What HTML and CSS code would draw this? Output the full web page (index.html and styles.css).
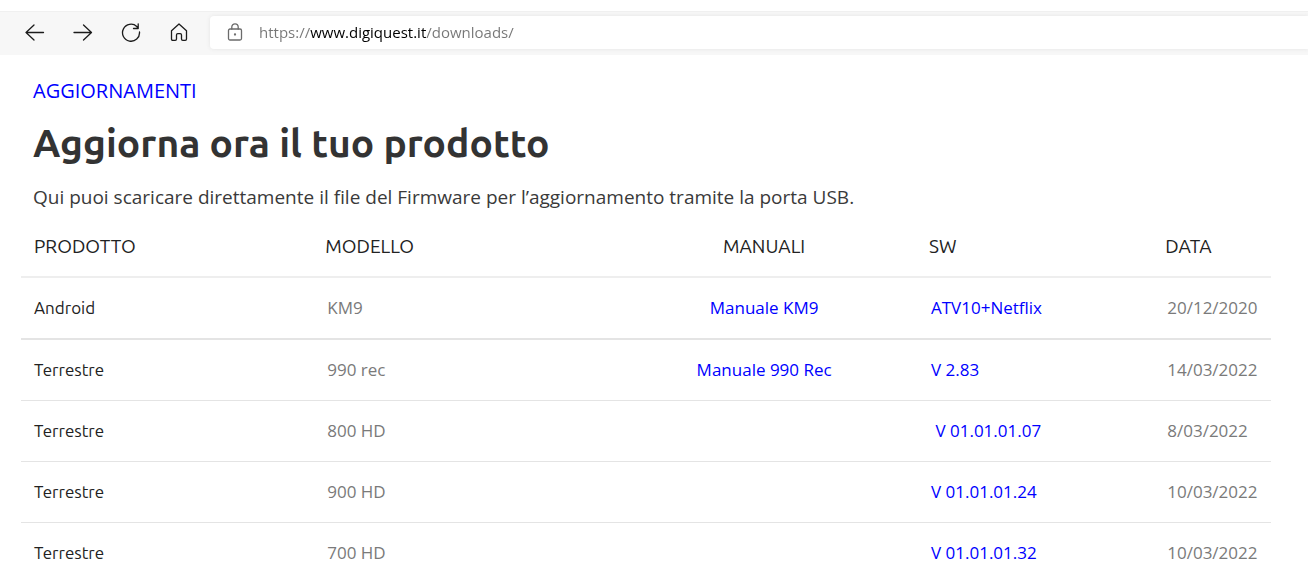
FILE: index.html
```html
<!DOCTYPE html>
<html lang="it">
<head>
<meta charset="utf-8">
<meta name="viewport" content="width=device-width, initial-scale=1">
<title>Aggiornamenti</title>
<link rel="stylesheet" href="styles.css">
</head>
<body>
<header class="toolbar">
  <nav class="nav-buttons">
    <button class="icon-button" type="button" aria-label="Indietro"><svg viewBox="0 0 20 20"><path d="M18.500 9.500H1M9 2L1 9.500l8 7.500"/></svg></button>
    <button class="icon-button" type="button" aria-label="Avanti"><svg viewBox="0 0 20 20"><path d="M1 9.500h17.500M10.500 2l8 7.500-8 7.500"/></svg></button>
    <button class="icon-button" type="button" aria-label="Aggiorna"><svg viewBox="0 0 20 20"><path d="M18.500 9A8.500 8.500 0 1 1 15.800 3.500L17 5M17.200 .8v4.700h-4.700"/></svg></button>
    <button class="icon-button" type="button" aria-label="Pagina iniziale"><svg viewBox="0 0 20 20"><path d="M2.500 7.700L10 1l7.500 6.700v8.300q0 1.300-1.300 1.300h-2.400q-1.300 0-1.300-1.300v-4q0-1.300-1.300-1.300H8.800q-1.300 0-1.300 1.300v4q0 1.300-1.300 1.300H3.800q-1.300 0-1.300-1.300z"/></svg></button>
  </nav>
  <label class="address">
    <svg class="lock" viewBox="0 0 20 20"><rect x="3.500" y="6" width="13" height="11" rx="1.500"/><path d="M6.800 6V4a3.200 3.200 0 0 1 6.400 0v2"/><circle cx="10" cy="11.500" r=".5"/></svg>
    <input class="url" type="text" aria-label="Indirizzo" value="https://www.digiquest.it/downloads/">
  </label>
</header>
<main class="page">
  <section class="intro">
    <a class="eyebrow" href="#aggiornamenti">AGGIORNAMENTI</a>
    <h1 class="title">Aggiorna ora il tuo prodotto</h1>
    <p class="lead">Qui puoi scaricare direttamente il file del Firmware per l’aggiornamento tramite la porta USB.</p>
  </section>
  <table class="downloads" id="aggiornamenti">
    <colgroup><col class="col-product"><col class="col-model"><col class="col-manual"><col class="col-sw"><col class="col-date"></colgroup>
    <thead>
      <tr><th scope="col">PRODOTTO</th><th scope="col">MODELLO</th><th scope="col" class="manual">MANUALI</th><th scope="col">SW</th><th scope="col">DATA</th></tr>
    </thead>
    <tbody>
      <tr class="strong-line"><td class="product">Android</td><td>KM9</td><td class="manual"><a href="#km9">Manuale KM9</a></td><td><a href="#atv10">ATV10+Netflix</a></td><td>20/12/2020</td></tr>
      <tr><td class="product">Terrestre</td><td>990 rec</td><td class="manual"><a href="#990rec">Manuale 990 Rec</a></td><td><a href="#v283">V 2.83</a></td><td>14/03/2022</td></tr>
      <tr><td class="product">Terrestre</td><td>800 HD</td><td class="manual"></td><td>&nbsp;<a href="#v07">V 01.01.01.07</a></td><td>8/03/2022</td></tr>
      <tr><td class="product">Terrestre</td><td>900 HD</td><td class="manual"></td><td><a href="#v24">V 01.01.01.24</a></td><td>10/03/2022</td></tr>
      <tr><td class="product">Terrestre</td><td>700 HD</td><td class="manual"></td><td><a href="#v32">V 01.01.01.32</a></td><td>10/03/2022</td></tr>
    </tbody>
  </table>
</main>
</body>
</html>
```
FILE: styles.css
```css
* { box-sizing: border-box; }
body {
  margin: 0;
  padding-top: 11px;
  background: #fff;
  color: #7a7a7a;
  font: 17px/24px "Open Sans", sans-serif;
}
a { color: #00f; text-decoration: none; }

.toolbar {
  display: flex;
  height: 44px;
  padding: 4px 0 6px 24px;
  gap: 20px;
  background: #f7f7f7;
  border-top: 1px solid #f0f0f0;
}
.nav-buttons { display: flex; align-items: center; gap: 26px; }
.icon-button {
  width: 22px;
  height: 22px;
  padding: 1px;
  border: 0;
  background: none;
}
.icon-button svg, .lock {
  display: block;
  width: 20px;
  height: 20px;
  fill: none;
  stroke: #1b1b1b;
  stroke-width: 1.3;
  stroke-linejoin: round;
  stroke-linecap: round;
}
.address {
  display: flex;
  flex: 1;
  align-items: center;
  gap: 14px;
  padding-left: 15px;
  background: #fff;
  border-radius: 4px 0 0 4px;
  box-shadow: 0 0 4px #e4e4e4;
}
.lock { stroke: #6b6b6b; }
.url {
  flex: 1;
  min-width: 0;
  padding: 0 0 2px;
  border: 0;
  outline: 0;
  background: linear-gradient(90deg, #767676 51px, #000 51px, #000 167px, #767676 167px);
  -webkit-background-clip: text;
  background-clip: text;
  color: transparent;
  font: 15px/22px "Open Sans", sans-serif;
}

.page { padding: 22px 37px 0 21px; }
.intro { padding-left: 12px; }
.eyebrow { display: block; font-size: 20px; line-height: 28px; }
.title {
  margin: 12px 0;
  color: #333;
  font: 700 39px/52px Ubuntu, "Noto Sans", sans-serif;
}
.lead { margin: 0; color: #3a3a3a; font-size: 19px; line-height: 32px; }

.downloads {
  width: 100%;
  table-layout: fixed;
  border-collapse: separate;
  border-spacing: 0;
}
.col-product { width: 23.3%; }
.col-model { width: 24%; }
.col-manual { width: 24.3%; }
.col-sw { width: 18.9%; }
.col-date { width: 9.5%; }
th {
  height: 65px;
  padding: 2px 0 0 13px;
  border-bottom: 2px solid #eee;
  color: #222;
  font: 400 19px/24px Ubuntu, "Noto Sans", sans-serif;
  text-align: left;
}
td {
  height: 61px;
  padding: 0 0 0 15px;
  border-bottom: 1px solid #e4e4e4;
  white-space: nowrap;
}
.strong-line td { height: 62px; border-bottom-width: 2px; }
td.product {
  padding-left: 13px;
  color: #222;
  font-family: Ubuntu, "Noto Sans", sans-serif;
}
th.manual, td.manual { padding-left: 0; text-align: center; }
tbody tr:last-child td { border-bottom-color: transparent; }
```
